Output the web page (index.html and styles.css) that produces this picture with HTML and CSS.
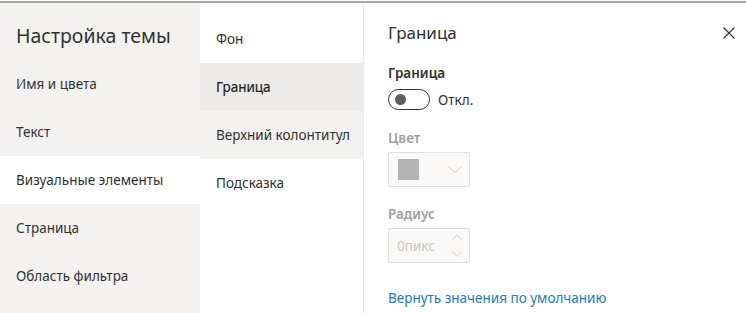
FILE: index.html
```html
<!DOCTYPE html>
<html lang="ru">
<head>
    <meta charset="UTF-8">
    <title>Настройка темы</title>
    <link rel="stylesheet" href="styles.css">
</head>
<body>
    <div class="app">
        <nav class="menu">
            <h1 class="menu-title">Настройка темы</h1>
            <ul class="menu-list">
                <li class="menu-item">Имя и цвета</li>
                <li class="menu-item">Текст</li>
                <li class="menu-item active">Визуальные элементы</li>
                <li class="menu-item">Страница</li>
                <li class="menu-item">Область фильтра</li>
            </ul>
        </nav>

        <div class="submenu">
            <ul class="submenu-list">
                <li class="submenu-item">Фон</li>
                <li class="submenu-item active">Граница</li>
                <li class="submenu-item hover">Верхний колонтитул</li>
                <li class="submenu-item">Подсказка</li>
            </ul>
        </div>

        <section class="panel">
            <div class="panel-head">
                <h2 class="panel-title">Граница</h2>
                <button class="close-btn" aria-label="Закрыть">
                    <svg width="12" height="12" viewBox="0 0 12 12">
                        <path d="M0.5 0.5 L11.5 11.5 M11.5 0.5 L0.5 11.5" stroke="#323130" stroke-width="1.1" fill="none"/>
                    </svg>
                </button>
            </div>

            <div class="field-label">Граница</div>
            <div class="toggle-row">
                <span class="toggle"><span class="toggle-thumb"></span></span>
                <span class="toggle-text">Откл.</span>
            </div>

            <div class="field-label disabled">Цвет</div>
            <div class="box color-box">
                <span class="swatch"></span>
                <svg class="chevron" width="14" height="7" viewBox="0 0 14 7">
                    <path d="M0.5 0.5 L7 6.5 L13.5 0.5" stroke="#c8c6c4" stroke-width="1" fill="none"/>
                </svg>
            </div>

            <div class="field-label disabled">Радиус</div>
            <div class="box spin-box">
                <span class="spin-value">0пикс</span>
                <span class="spin-arrows">
                    <svg width="10" height="6" viewBox="0 0 10 6">
                        <path d="M0.5 5.5 L5 0.8 L9.5 5.5" stroke="#d2d0ce" stroke-width="1" fill="none"/>
                    </svg>
                    <svg width="10" height="6" viewBox="0 0 10 6">
                        <path d="M0.5 0.5 L5 5.2 L9.5 0.5" stroke="#d2d0ce" stroke-width="1" fill="none"/>
                    </svg>
                </span>
            </div>

            <a class="reset-link" href="#">Вернуть значения по умолчанию</a>
        </section>
    </div>
</body>
</html>
```

FILE: styles.css
```css
body {
    margin: 0;
    font-family: 'Noto Sans', 'Open Sans', sans-serif;
    font-size: 13.5px;
    color: #323130;
    background-color: #ffffff;
}

.app {
    display: flex;
    margin-top: 1px;
    border-top: 2px solid #a8a6a4;
    height: calc(100vh - 3px);
    overflow: hidden;
}

/* левое меню */
.menu {
    width: 200px;
    flex-shrink: 0;
    background-color: #f3f2f1;
}

.menu-title {
    margin: 0;
    padding: 18px 16px 10px;
    font-size: 19.5px;
    font-weight: 400;
    line-height: 29px;
}

.menu-list,
.submenu-list {
    list-style: none;
    margin: 0;
    padding: 0;
}

.menu-item,
.submenu-item {
    height: 48px;
    line-height: 49px;
    padding: 0 16px;
    white-space: nowrap;
}

.menu-item.active {
    background-color: #ffffff;
}

/* второе меню */
.submenu {
    width: 163px;
    flex-shrink: 0;
    border-right: 1px solid #edebe9;
    padding-top: 12px;
}

.submenu-item.active {
    background-color: #edebe9;
    color: #201f1e;
    -webkit-text-stroke: 0.2px #201f1e;
}

.submenu-item.hover {
    background-color: #f3f2f1;
}

/* панель */
.panel {
    flex: 1;
    padding: 18px 11px 0 24px;
}

.panel-head {
    display: flex;
    justify-content: space-between;
    align-items: center;
    margin-bottom: 18px;
}

.panel-title {
    margin: 0;
    font-size: 17px;
    font-weight: 400;
    line-height: 24px;
}

.close-btn {
    border: none;
    background: none;
    padding: 0;
    width: 12px;
    height: 12px;
    display: flex;
}

.field-label {
    font-weight: 600;
    line-height: 20px;
    margin-bottom: 6px;
}

.field-label.disabled {
    color: #a19f9d;
    margin-bottom: 4px;
}

.toggle-row {
    display: flex;
    align-items: center;
    margin-bottom: 18px;
}

.toggle {
    box-sizing: border-box;
    width: 42px;
    height: 21px;
    border: 1px solid #323130;
    border-radius: 11px;
    display: flex;
    align-items: center;
    padding-left: 6px;
}

.toggle-thumb {
    width: 11px;
    height: 11px;
    border-radius: 50%;
    background-color: #605e5c;
}

.toggle-text {
    margin-left: 8px;
}

.box {
    box-sizing: border-box;
    width: 82px;
    height: 35px;
    border: 1px solid #e1dfdd;
    border-radius: 2px;
    background-color: #faf9f8;
    display: flex;
    align-items: center;
    justify-content: space-between;
}

.color-box {
    padding: 0 7px 1px 9px;
    margin-bottom: 17px;
}

.swatch {
    width: 21px;
    height: 21px;
    background-color: #b3b3b3;
}

.spin-box {
    padding: 0 7px 0 8px;
    margin-bottom: 25px;
}

.spin-value {
    color: #c8c6c4;
}

.spin-arrows {
    display: flex;
    flex-direction: column;
    gap: 11px;
}

.reset-link {
    display: block;
    color: #1a7bc4;
    text-decoration: none;
    line-height: 20px;
}
```
